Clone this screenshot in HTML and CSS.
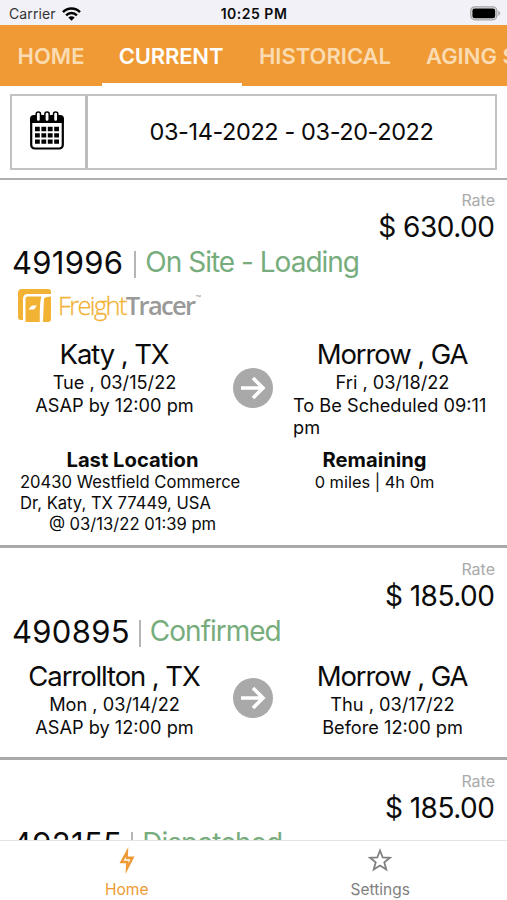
FILE: index.html
```html
<!DOCTYPE html>
<html lang="en">
<head>
<meta charset="utf-8">
<title>Loads</title>
<link rel="stylesheet" href="styles.css">
</head>
<body>
<div class="app">
  <header class="statusbar">
    <div class="carrier"><span class="carrier-name">Carrier</span>
      <svg class="wifi" width="19" height="14" viewBox="0 0 19 14"><g fill="none" stroke="#000" stroke-width="2.5"><path d="M1 5.1C5.7.4 13.3.4 18 5.1"/><path d="M4.1 8.3c3-3 7.8-3 10.8 0"/></g><path d="M6.3 10.4c1.8-1.7 4.6-1.7 6.4 0L9.5 13.7z"/></svg>
    </div>
    <div class="clock">10:25 PM</div>
    <svg class="battery" width="31" height="15" viewBox="0 0 31 15"><rect x=".8" y=".8" width="26" height="13" rx="4" fill="#e4e4e6" stroke="#a5a5a8" stroke-width="1.3"/><rect x="2.4" y="2.4" width="22.8" height="9.8" rx="2.3"/><path d="M28.3 4.8c2.4.6 2.4 4.4 0 5z" fill="#a5a5a8"/></svg>
  </header>
  <nav class="tabs">
    <div class="tab t-home"><span>HOME</span></div>
    <div class="tab t-current active"><span>CURRENT</span></div>
    <div class="tab t-hist"><span>HISTORICAL</span></div>
    <div class="tab t-aging"><span>AGING S</span></div>
  </nav>
  <section class="filter">
    <div class="picker">
      <div class="cal">
        <svg width="36" height="40" viewBox="0 0 36 40"><rect x="2.2" y="6" width="31.6" height="31.5" rx="3.5" fill="#fff" stroke="#000" stroke-width="2.2"/><path d="M1 12V8q0-4 4-4h26q4 0 4 4v4z"/><g fill="#fff" stroke="#000" stroke-width="1.5"><rect x="7.2" y="1" width="4.3" height="9.6" rx="2.1"/><rect x="15.9" y="1" width="4.3" height="9.6" rx="2.1"/><rect x="24.5" y="1" width="4.3" height="9.6" rx="2.1"/></g><path d="M6 18h24M6 24.3h24M6 30.6h24" stroke="#000" stroke-width="4.3" stroke-dasharray="4.8 1.6"/></svg>
      </div>
      <div class="range"><span>03-14-2022 - 03-20-2022</span></div>
    </div>
  </section>
  <main class="list">
    <article class="card">
      <div class="rate">Rate</div>
      <div class="price">$ 630.00</div>
      <div class="order"><span class="num">491996</span><i class="bar"></i><span class="state">On Site - Loading</span></div>
      <div class="brand">
        <svg class="mark" width="34" height="34" viewBox="0 0 34 34"><path d="M4 0h26q3 0 3 3v2H10Q5 5 5 10v21H3q-3 0-3-3V4q0-4 4-4z" fill="#f2b233"/><path d="M10 7.5h13.5Q21.5 12 21.8 33H7.5V10q0-2.5 2.5-2.5z" fill="#f2b233"/><path d="M26 9.5q2-2 7-2V30q0 3-3 3h-5z" fill="#f2b233"/><path d="M11 19.5l3-3h5l-3 4h-5z" fill="#fff"/></svg>
        <span class="wordmark"><span class="freight">Freight</span><b>Tracer</b></span><span class="tm">™</span>
      </div>
      <div class="route">
        <div class="stop"><div class="city">Katy , TX</div><div class="when">Tue , 03/15/22</div><div class="when">ASAP by 12:00 pm</div></div>
        <svg class="arrow" width="40" height="40" viewBox="0 0 40 40"><circle cx="20" cy="20" r="20" fill="#a9a9a9"/><path d="M8 20h21M20 10l10 10-10 10" fill="none" stroke="#fff" stroke-width="3.6"/></svg>
        <div class="stop"><div class="city">Morrow , GA</div><div class="when">Fri , 03/18/22</div><div class="when">To Be Scheduled 09:11 pm</div></div>
      </div>
      <div class="details">
        <div class="location"><div class="heading">Last Location</div><div class="address">20430 Westfield Commerce Dr, Katy, TX 77449, USA</div><div class="small">@ 03/13/22 01:39 pm</div></div>
        <div class="remaining"><div class="heading">Remaining</div><div class="small">0 miles | 4h 0m</div></div>
      </div>
    </article>
    <article class="card">
      <div class="rate">Rate</div>
      <div class="price">$ 185.00</div>
      <div class="order"><span class="num">490895</span><i class="bar"></i><span class="state">Confirmed</span></div>
      <div class="route">
        <div class="stop"><div class="city">Carrollton , TX</div><div class="when">Mon , 03/14/22</div><div class="when">ASAP by 12:00 pm</div></div>
        <svg class="arrow" width="40" height="40" viewBox="0 0 40 40"><circle cx="20" cy="20" r="20" fill="#a9a9a9"/><path d="M8 20h21M20 10l10 10-10 10" fill="none" stroke="#fff" stroke-width="3.6"/></svg>
        <div class="stop"><div class="city">Morrow , GA</div><div class="when">Thu , 03/17/22</div><div class="when">Before 12:00 pm</div></div>
      </div>
    </article>
    <article class="card">
      <div class="rate">Rate</div>
      <div class="price">$ 185.00</div>
      <div class="order"><span class="num">492155</span><i class="bar"></i><span class="state">Dispatched</span></div>
    </article>
  </main>
  <footer class="bottom">
    <div class="item on"><svg width="16" height="27" viewBox="0 0 16 27"><path fill-rule="evenodd" d="M9.3 0L8.9 9.5H15.5L6.5 27 7.1 16.3H.5zM4.6 13.8h5l-.2 2.6 2-4.2H6.6l.2-2.6z" fill="#ee9a34"/></svg><span>Home</span></div>
    <div class="item"><svg width="26" height="26" viewBox="0 0 26 26"><path d="M13 3l2.7 7 7.3.3-5.7 4.6 2 7.1-6.3-4-6.3 4 2-7.1L3 10.3l7.3-.3z" fill="none" stroke="#808080" stroke-width="1.8"/></svg><span>Settings</span></div>
  </footer>
</div>
</body>
</html>
```
FILE: styles.css
```css
* { box-sizing: border-box; }
body { margin: 0; background: #fff; color: #0b0b0b; font-family: Inter, "Liberation Sans", sans-serif; }
.app { width: 507px; height: 900px; display: flex; flex-direction: column; overflow: hidden; white-space: nowrap; }
.statusbar { height: 25px; flex: none; background: #f2f1f8; display: grid; grid-template-columns: 1fr auto 1fr; align-items: center; padding: 2px 6px 0 9px; font-size: 14px; }
.carrier { display: flex; align-items: center; gap: 6px; color: #333; }
.carrier-name { letter-spacing: .1px; }
.clock { font-weight: 600; letter-spacing: .5px; margin-right: 2px; }
.battery { justify-self: end; }
.tabs { height: 61px; flex: none; display: flex; background: #ef9a34; color: #fbdcb2; font-size: 22px; font-weight: 600; overflow: hidden; }
.tab { flex: none; display: flex; align-items: center; justify-content: center; border-bottom: 3px solid transparent; padding-top: 3px; }
.t-home { width: 102px; }
.t-current { width: 140px; letter-spacing: -.15px; padding-right: 2px; }
.t-hist { width: 166px; }
.t-aging { padding-left: 18px; }
.active { color: #fff; border-color: #fff; }
.filter { height: 94px; flex: none; padding: 8px 10px; border-bottom: 2px solid #b0b0b0; }
.picker { height: 76px; display: flex; border: 2px solid #c2c2c2; }
.cal { width: 76px; display: flex; align-items: center; justify-content: center; padding-right: 3px; border-right: 3px solid #bdbdbd; }
.cal svg { margin-top: -2px; }
.range { flex: 1; display: flex; align-items: center; justify-content: center; padding-bottom: 2px; font-size: 23.5px; letter-spacing: -.4px; }
.list { flex: 1; min-height: 0; overflow: hidden; padding-top: 1px; }
.card { padding: 10px 12px 0; border-bottom: 3px solid #a9a9a9; height: 212px; }
.card:first-child { height: 367px; padding-top: 8px; }
.rate { text-align: right; font-size: 16px; line-height: 22px; color: #aaa; }
.price { text-align: right; font-size: 28px; line-height: 32px; letter-spacing: -.5px; padding-right: .6px; }
.order { height: 38px; display: flex; align-items: center; }
.num { font-size: 31px; letter-spacing: .3px; }
.bar { width: 2px; height: 27px; margin: 4px 9px 0 9px; background: #b5b5b5; }
.card:first-child .bar { margin-left: 11px; }
.state { font-size: 28px; color: #77ad7d; letter-spacing: -1px; }
.brand { height: 47px; padding: 8px 0 0 6px; display: flex; align-items: flex-start; }
.mark { flex: none; }
.wordmark { font-family: "Open Sans", sans-serif; font-size: 25.5px; line-height: 32px; letter-spacing: -1.65px; margin-left: 6px; color: #999; }
.freight { font-weight: 300; color: #f2b233; -webkit-text-stroke: .3px #f2b233; }
.wordmark b { font-weight: 600; }
.tm { font-size: 9px; line-height: 20px; margin-left: 1px; color: #999; }
.route { display: flex; justify-content: space-between; padding: 8px 3px 0; }
.stop { width: 199px; display: flex; flex-direction: column; align-items: center; }
.city { font-size: 27.5px; line-height: 36px; letter-spacing: -1.1px; padding-right: 1px; }
.when { font-size: 18.2px; line-height: 22.5px; white-space: normal; position: relative; top: -.6px; }
.arrow { margin: 20px 1px 0 0; flex: none; }
.card:first-child .arrow { margin-top: 32px; }
.details { display: flex; padding: 7.5px 0 0 8px; }
.location { width: 225px; flex: none; }
.remaining { width: 259px; flex: none; }
.location, .remaining { display: flex; flex-direction: column; align-items: center; }
.heading { font-size: 20.2px; line-height: 25px; font-weight: 700; }
.address, .small { font-size: 16.6px; line-height: 20.8px; white-space: normal; }
.address { align-self: stretch; }
.remaining .small { font-size: 16.4px; }
.bottom { height: 60px; flex: none; display: flex; border-top: 1px solid #e4e4e4; background: #fff; }
.item { flex: 1; display: flex; flex-direction: column; align-items: center; font-size: 15.5px; color: #808080; padding-top: 6px; }
.item svg { height: 27px; }
.item span { line-height: 20px; margin-top: 6px; }
.on { color: #ee9a34; }
```
